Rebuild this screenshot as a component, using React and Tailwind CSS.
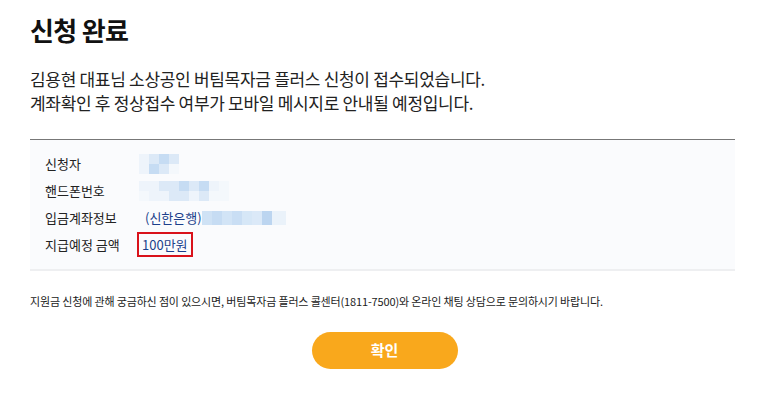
const font = { fontFamily: '"Noto Sans CJK KR", "Noto Sans", sans-serif' };

function Blur({ cells }) {
  // pixelated blur of a hidden value
  return (
    <div className="flex flex-col">
      {cells.map((row, i) => (
        <div key={i} className="flex">
          {row.map((c, j) => (
            <div key={j} className="w-[10px] h-[10px]" style={{ backgroundColor: c }} />
          ))}
        </div>
      ))}
    </div>
  );
}

const a = "#eef4fb";
const b = "#dce9f7";
const c = "#c6dcf3";
const e = "#f4f8fc";

export default function App() {
  return (
    <div className="w-[773px] h-[406px] bg-white text-[#222] px-[30px]" style={font}>
      <h1 className="pt-[13px] text-[26px] leading-[34px] font-semibold text-[#111] tracking-tight">
        신청 완료
      </h1>
      <div className="mt-[20px] text-[17px] leading-[24px] text-[#222] tracking-[-0.3px]">
        <p>김용현 대표님 소상공인 버팀목자금 플러스 신청이 접수되었습니다.</p>
        <p>계좌확인 후 정상접수 여부가 모바일 메시지로 안내될 예정입니다.</p>
      </div>

      <div className="mt-[24px] w-[705px] h-[132px] border-t border-[#777] border-b-2 border-b-[#eeeff1] bg-[#fafbfd] pl-[15px] pt-[11px] text-[13px] text-[#222]">
        <div className="flex items-center h-[26px]">
          <span className="w-[94px]">신청자</span>
          <Blur cells={[[a, b, c, b], [a, c, b, e]]} />
        </div>
        <div className="flex items-center h-[27px]">
          <span className="w-[94px]">핸드폰번호</span>
          <Blur cells={[[a, a, b, b, c, b, c, a, e], [e, a, a, b, b, a, b, e, e]]} />
        </div>
        <div className="flex items-center h-[27px]">
          <span className="w-[100px]">입금계좌정보</span>
          <span className="text-[#1b3f8b]">(신한은행)</span>
          <div className="flex h-[14px]">
            <div className="w-[10px] bg-[#cfe2f5]" />
            <div className="w-[10px] bg-[#c6dcf3]" />
            <div className="w-[10px] bg-[#d2e4f6]" />
            <div className="w-[10px] bg-[#c9def4]" />
            <div className="w-[10px] bg-[#d6e7f7]" />
            <div className="w-[10px] bg-[#dbe9f8]" />
            <div className="w-[10px] bg-[#bcd5f0]" />
            <div className="w-[14px] bg-[#eaf2fa]" />
          </div>
        </div>
        <div className="flex items-center h-[27px]">
          <span className="w-[92px]">지급예정 금액</span>
          <span className="border-2 border-[#d9121b] px-[3px] leading-[21px] text-[#1b3f8b]">100만원</span>
        </div>
      </div>

      <p className="mt-[22px] text-[11px] leading-[16px] text-[#222] tracking-[-0.15px]">
        지원금 신청에 관해 궁금하신 점이 있으시면, 버팀목자금 플러스 콜센터(1811-7500)와 온라인 채팅 상담으로 문의하시기 바랍니다.
      </p>

      <div className="flex justify-center mt-[23px] pr-[4px]">
        <button className="w-[146px] h-[37px] rounded-full bg-[#f9a81c] text-white text-[15px] font-bold">
          확인
        </button>
      </div>
    </div>
  );
}
